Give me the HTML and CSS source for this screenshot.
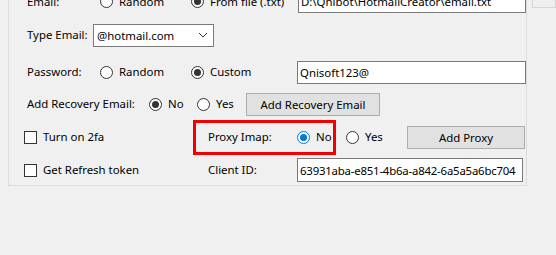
FILE: index.html
```html
<!DOCTYPE html>
<html>
<head>
<meta charset="utf-8">
<link rel="stylesheet" href="styles.css">
</head>
<body>
<div class="page">
  <div class="group">
    <div class="row r1">
      <div class="pad18"></div>
      <div class="cell w73">Email:</div>
      <div class="cell w91"><span class="radio"></span><span class="rt">Random</span></div>
      <div class="cell w107"><span class="radio on"></span><span class="rt">From file (.txt)</span></div>
      <div class="tb w228">D:\Qhibot\HotmailCreator\email.txt</div>
    </div>
    <div class="row r2">
      <div class="pad18"></div>
      <div class="cell w66">Type Email:</div>
      <div class="combo"><span>@hotmail.com</span><svg width="10" height="6" viewBox="0 0 10 6"><path d="M1 1 L5 5 L9 1" fill="none" stroke="#333" stroke-width="1"/></svg></div>
    </div>
    <div class="row r3">
      <div class="pad18"></div>
      <div class="cell w73">Password:</div>
      <div class="cell w91"><span class="radio"></span><span class="rt">Random</span></div>
      <div class="cell w106"><span class="radio on"></span><span class="rt">Custom</span></div>
      <div class="tb w229">Qnisoft123@</div>
    </div>
    <div class="row r4">
      <div class="pad18"></div>
      <div class="cell w122">Add Recovery Email:</div>
      <div class="cell w48"><span class="radio on"></span><span class="rt">No</span></div>
      <div class="cell w49"><span class="radio"></span><span class="rt">Yes</span></div>
      <div class="btn w134">Add Recovery Email</div>
    </div>
    <div class="row r5">
      <div class="pad15"></div>
      <div class="cell w184"><span class="check"></span><span class="ct">Turn on 2fa</span></div>
      <div class="cell w89">Proxy Imap:</div>
      <div class="cell w49"><span class="radio on blue"></span><span class="rt">No</span></div>
      <div class="cell w61"><span class="radio"></span><span class="rt">Yes</span></div>
      <div class="btn w118">Add Proxy</div>
    </div>
    <div class="row r6">
      <div class="pad15"></div>
      <div class="cell w184"><span class="check"></span><span class="ct">Get Refresh token</span></div>
      <div class="cell w89">Client ID:</div>
      <div class="tb w226 h24 tight">63931aba-e851-4b6a-a842-6a5a5a6bc704</div>
    </div>
    <div class="highlight"></div>
  </div>
  <div class="side"></div>
</div>
</body>
</html>
```
FILE: styles.css
```css
html, body {
  margin: 0;
  padding: 0;
  background: #f0f0f0;
  overflow: hidden;
}
body {
  width: 556px;
  height: 255px;
  font-family: "Noto Sans", "Open Sans", sans-serif;
  font-size: 11.4px;
  color: #000;
}
.page {
  display: flex;
  align-items: flex-start;
}
.group {
  position: relative;
  margin-left: 8px;
  margin-top: -13px;
  width: 526px;
  box-sizing: border-box;
  border: 1px solid #dcdcdc;
  display: flex;
  flex-direction: column;
}
.side {
  margin-left: 5px;
  margin-top: -12px;
  width: 40px;
  height: 20px;
  box-sizing: border-box;
  border: 1px solid #d4d4d4;
  background: #efefef;
}
.row {
  display: flex;
  align-items: center;
}
.r1 { height: 27px; }
.r2 { height: 40px; }
.r3 { height: 34px; }
.r4 { height: 30px; }
.r5 { height: 36px; }
.r6 { height: 30px; }
.pad18 { width: 18px; flex: none; }
.pad15 { width: 15px; flex: none; }
.cell {
  flex: none;
  display: flex;
  align-items: center;
  white-space: nowrap;
  line-height: 16px;
}
.w48 { width: 48px; }
.w49 { width: 49px; }
.w61 { width: 61px; }
.w66 { width: 66px; }
.w73 { width: 73px; }
.w89 { width: 89px; }
.w91 { width: 91px; }
.w106 { width: 106px; }
.w107 { width: 107px; }
.w118 { width: 118px; }
.w122 { width: 122px; }
.w134 { width: 134px; }
.w184 { width: 184px; }
.w226 { width: 226px; }
.w228 { width: 228px; }
.w229 { width: 229px; }
.radio {
  flex: none;
  width: 13px;
  height: 13px;
  box-sizing: border-box;
  border: 1px solid #333;
  border-radius: 50%;
  background: #fff;
  display: flex;
  align-items: center;
  justify-content: center;
}
.radio.on::after {
  content: "";
  width: 7px;
  height: 7px;
  border-radius: 50%;
  background: #333;
}
.radio.blue {
  border-color: #0078d7;
}
.radio.blue::after {
  background: #0078d7;
}
.rt { margin-left: 6px; }
.check {
  flex: none;
  width: 13px;
  height: 13px;
  box-sizing: border-box;
  border: 1px solid #333;
  background: #fff;
}
.ct { margin-left: 6px; }
.tb {
  flex: none;
  height: 23px;
  box-sizing: border-box;
  border: 1px solid #7a7a7a;
  background: #fff;
  padding-left: 2px;
  display: flex;
  align-items: center;
  white-space: nowrap;
  overflow: hidden;
}
.tight { letter-spacing: -0.2px; }
.h24 { height: 24px; }
.combo {
  flex: none;
  width: 121px;
  height: 23px;
  box-sizing: border-box;
  border: 1px solid #7a7a7a;
  background: #fff;
  padding: 0 5px 0 3px;
  display: flex;
  align-items: center;
  justify-content: space-between;
}
.btn {
  flex: none;
  height: 23px;
  box-sizing: border-box;
  border: 1px solid #adadad;
  background: #e1e1e1;
  display: flex;
  align-items: center;
  justify-content: center;
  white-space: nowrap;
}
.highlight {
  position: absolute;
  left: 184px;
  top: 132px;
  width: 143px;
  height: 35px;
  box-sizing: border-box;
  border: 3px solid #f00000;
}
```
